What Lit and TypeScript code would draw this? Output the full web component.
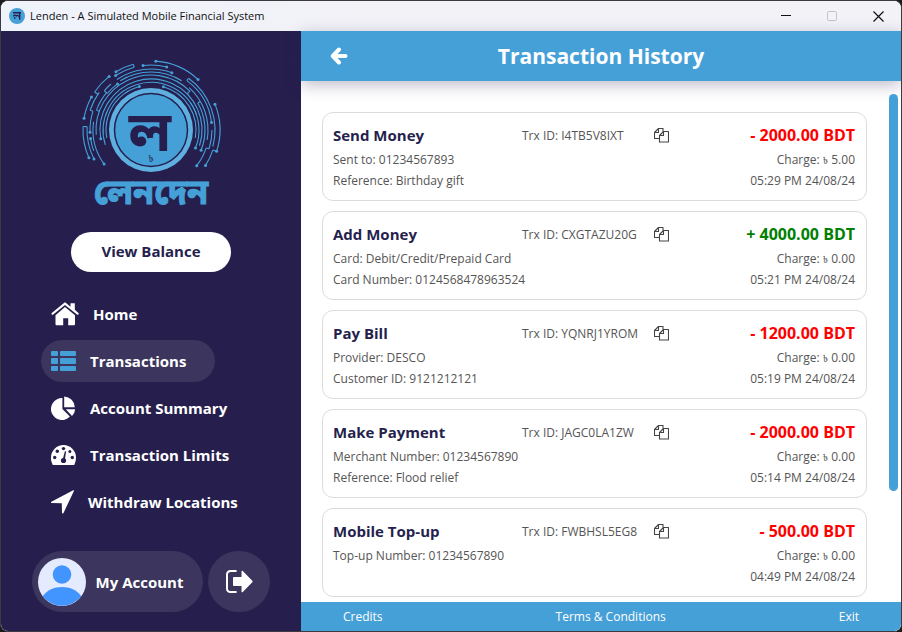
import { LitElement, html, svg, css } from "lit";
import { customElement, property } from "lit/decorators.js";
import { classMap } from "lit/directives/class-map.js";

interface Transaction {
  title: string;
  lines: string[];
  id: string;
  amount: string;
  credit?: boolean;
  charge: string;
  time: string;
}

const TRANSACTIONS: Transaction[] = [
  { title: "Send Money", lines: ["Sent to: 01234567893", "Reference: Birthday gift"], id: "I4TB5V8IXT", amount: "- 2000.00 BDT", charge: "5.00", time: "05:29 PM 24/08/24" },
  { title: "Add Money", lines: ["Card: Debit/Credit/Prepaid Card", "Card Number: 0124568478963524"], id: "CXGTAZU20G", amount: "+ 4000.00 BDT", credit: true, charge: "0.00", time: "05:21 PM 24/08/24" },
  { title: "Pay Bill", lines: ["Provider: DESCO", "Customer ID: 9121212121"], id: "YQNRJ1YROM", amount: "- 1200.00 BDT", charge: "0.00", time: "05:19 PM 24/08/24" },
  { title: "Make Payment", lines: ["Merchant Number: 01234567890", "Reference: Flood relief"], id: "JAGC0LA1ZW", amount: "- 2000.00 BDT", charge: "0.00", time: "05:14 PM 24/08/24" },
  { title: "Mobile Top-up", lines: ["Top-up Number: 01234567890"], id: "FWBHSL5EG8", amount: "- 500.00 BDT", charge: "0.00", time: "04:49 PM 24/08/24" },
];

const FONT = css`"Open Sans", "Noto Sans", "Noto Sans Bengali", sans-serif`;

const homeIcon = svg`<svg width="28" height="24" viewBox="0 0 28 24" fill="#fff" aria-hidden="true">
  <path d="M19.500 1.200h4.300v6.600l3.600 3.200c.9.800-.4 2.300-1.400 1.500L14 2.900 2.200 12.500c-1 .8-2.300-.7-1.400-1.500L13 .9c.6-.5 1.400-.5 2 0l4.500 3.800z"/>
  <path d="M14 5l10 8.200V22c0 .9-.4 1.300-1.300 1.300h-5.500v-7h-5v7H5.800c-.9 0-1.300-.4-1.300-1.300v-8.800z"/></svg>`;
const listIcon = svg`<svg width="25" height="20" viewBox="0 0 25 20" fill="#46a0d8" aria-hidden="true">
  <rect width="7" height="5" rx="1"/><rect x="9" width="16" height="5" rx="1"/>
  <rect y="7" width="7" height="6" rx="1"/><rect x="9" y="7" width="16" height="6" rx="1"/>
  <rect y="15" width="7" height="5" rx="1"/><rect x="9" y="15" width="16" height="5" rx="1"/></svg>`;
const pieIcon = svg`<svg width="25" height="25" viewBox="0 0 25 25" fill="#fff" aria-hidden="true">
  <path d="M11.400 2v11l7.500 7.600A11 11 0 1 1 11.400 2z"/><path d="M13.200.5a11 11 0 0 1 10.600 10.700H13.200z"/>
  <path d="M14.800 13.200h9.300a10 10 0 0 1-3.100 6.700z"/></svg>`;
const gaugeIcon = svg`<svg width="25" height="20" viewBox="0 0 25 20" aria-hidden="true">
  <path fill="#fff" d="M1.800 20A12.400 12.400 0 0 1 0 12.500a12.500 12.500 0 0 1 25 0c0 2.900-.7 5.400-1.800 7.500z"/>
  <g fill="#261f4e"><circle cx="12.500" cy="3.600" r="1.700"/><circle cx="6.300" cy="6.300" r="1.700"/><circle cx="18.900" cy="6.500" r="1.500"/>
  <circle cx="3.700" cy="12.500" r="1.700"/><circle cx="21.300" cy="12.500" r="1.700"/><circle cx="12.500" cy="15.500" r="2.600"/>
  <path d="M11.700 14.500l2.200-8.200 1.200.3-1.300 8.400z"/></g></svg>`;
const arrowIcon = svg`<svg width="23" height="24" viewBox="0 0 23 24" fill="#fff" aria-hidden="true">
  <path d="M22.200.3c.6-.3 1 .1.700.8L12.500 23c-.4.900-1.500.700-1.500-.2l-.2-9.600-10.200-.1c-.8 0-.9-1-.2-1.400z"/></svg>`;
const avatarIcon = svg`<svg width="48" height="48" viewBox="0 0 48 48" aria-hidden="true">
  <circle cx="24" cy="24" r="24" fill="#e5ebff"/><circle cx="24" cy="16.500" r="9.300" fill="#4294ff"/>
  <path fill="#4294ff" d="M4.800 38.200C9 32 16 29 24 29s15 3 19.200 9.200A24 24 0 0 1 4.800 38.200z"/></svg>`;
const exitIcon = svg`<svg width="27" height="23" viewBox="0 0 27 23" fill="#fff" aria-hidden="true">
  <path d="M10.600 0v2H4.700C3 2 2 3 2 4.600v13.800C2 20 3 21 4.700 21h5.900v2H4.700C1.700 23 0 21.200 0 18.400V4.600C0 1.800 1.700 0 4.700 0z"/>
  <path d="M15.500 1.600c0-.9.700-1.200 1.300-.6l9.500 9.700c.5.500.5 1 0 1.500L16.800 22c-.6.600-1.300.3-1.300-.6V16H8.200c-.7 0-1.200-.4-1.200-1.100V8.100C7 7.400 7.500 7 8.200 7h7.300z"/></svg>`;
const backIcon = svg`<svg width="18" height="18" viewBox="0 0 18 18" fill="none" stroke="#fff" stroke-width="4" stroke-linecap="round" stroke-linejoin="round" aria-hidden="true">
  <path d="M9 2.500L2.800 9 9 15.500M3.500 9H15.500"/></svg>`;
const copyIcon = svg`<svg width="15" height="15" viewBox="0 0 15 15" fill="none" stroke="#444" stroke-width="1.100" stroke-linejoin="round" aria-hidden="true">
  <path d="M5.500 10.500h-5v-6l4-4h4.500v3"/><path d="M.5 4.500h4v-4"/><path d="M9.500 3.500h5v10.500H5.500V7.500z"/><path d="M5.500 7.500h4v-4"/></svg>`;

const CX = 80;
const CY = 80;
const point = (r: number, deg: number): [number, number] => {
  const a = (deg * Math.PI) / 180;
  return [CX + r * Math.sin(a), CY - r * Math.cos(a)];
};
const at = (r: number, deg: number) => point(r, deg).map((v) => v.toFixed(2)).join(" ");
const arc = (r: number, from: number, to: number) =>
  `M${at(r, from)}A${r} ${r} 0 ${Math.abs(to - from) > 180 ? 1 : 0} ${to > from ? 1 : 0} ${at(r, to)}`;
const step = (r1: number, r2: number, deg: number) => `M${at(r1, deg)}L${at(r2, deg)}`;

// Circuit tracks around the coin: [radius, start angle, end angle], clockwise from the top.
const TRACKS: [number, number, number][] = [
  [69, 4, 43], [65, -7, 14], [68, -31, -15], [65, -33, -15],
  [68, -56, -38], [68, -80, -61], [68, -114, -87], [64, -117, -87],
  [61, -92, -72], [61, -110, -98], [64, -72, -54], [61, -50, -41], [57, -50, -36],
  [69, 68, 108], [64, 36, 105], [65, 108, 123], [61, 36, 83], [61, 90, 108], [58, 108, 128],
  [61, -34, 20], [58, -32, 32], [55, -95, 45], [51, -100, 66], [48, -108, 72], [45, -100, -45],
  [58, -126, -82], [58, -70, -50], [57, 42, 100], [54, 60, 112], [51, 66, 108], [48, 55, 112],
  [45, -45, -15], [45, 16, 100],
];
const STEPS: [number, number, number][] = [
  [68, 65, -15], [68, 64, -56], [68, 64, -87], [61, 57, -50], [58, 55, -70], [64, 61, -72],
  [64, 61, 36], [57, 54, 60], [69, 65, 108], [61, 58, 108], [55, 51, 45],
];
const NODES: [number, number][] = [
  [69, 4], [69, 43], [65, -7], [65, 14], [68, -31], [65, -33], [68, -38], [68, -61], [68, -80],
  [68, -114], [64, -117], [61, -98], [61, -92], [61, 20], [57, -36], [58, -126], [45, -15], [45, 16],
  [69, 68], [61, 83], [65, 123], [58, 128], [69, 108], [54, 112], [48, 112], [51, -100],
];

const logo = svg`<svg class="logo" width="160" height="164" viewBox="0 0 160 164" role="img" aria-label="Lenden">
  <g fill="none" stroke="#46a0d8" stroke-width="1.100">
    ${TRACKS.map(([r, a, b]) => svg`<path d=${arc(r, a, b)}/>`)}
    ${STEPS.map(([a, b, d]) => svg`<path d=${step(a, b, d)}/>`)}
  </g>
  <g fill="#46a0d8">${NODES.map(([r, d]) => svg`<circle cx=${point(r, d)[0]} cy=${point(r, d)[1]} r="1.500"/>`)}</g>
  <circle cx="80" cy="80" r="42" fill="#5db0e0"/>
  <circle cx="80" cy="80" r="36.500" fill="#46a0d8" stroke="#261f4e" stroke-width="1.500"/>
  <text text-anchor="middle" fill="#261f4e"><tspan x="79" y="101" font-size="56" font-weight="700">ল</tspan><tspan x="80" y="112" font-size="9" font-weight="400">৳</tspan></text>
  <text x="80" y="154" text-anchor="middle" font-size="34" font-weight="700" fill="#46a0d8" stroke="#46a0d8">লেনদেন</text></svg>`;

@customElement("transaction-card")
export class TransactionCard extends LitElement {
  @property({ attribute: false }) item!: Transaction;

  static styles = css`
    :host {
      display: grid;
      grid-template-columns: 189px 1fr auto;
      flex: none;
      min-height: 89px;
      box-sizing: border-box;
      padding: 10px 11px 9px 10px;
      border: 1px solid #dcdcdc;
      border-radius: 11px;
      background: #fff;
      color: #555;
      font: 12px/21px ${FONT};
      white-space: nowrap;
    }
    h2 { margin: 0 0 2px; color: #261f4e; font-size: 15px; line-height: 24px; font-weight: 700; }
    p { margin: 0; }
    .ref { display: grid; grid-template-columns: 132px auto; justify-content: start; align-items: center; height: 24px; }
    .copy { display: flex; padding: 0; border: 0; background: none; }
    .sum { text-align: right; }
    .amount { margin-bottom: 2px; color: #f00; font-size: 16px; line-height: 24px; font-weight: 700; }
    .credit { color: #008000; }
    .taka { font-size: 9px; line-height: 1; }
  `;

  render() {
    const t = this.item;
    return html`
      <div><h2>${t.title}</h2>${t.lines.map((l) => html`<p>${l}</p>`)}</div>
      <div class="ref"><span>Trx ID: ${t.id}</span><button class="copy" aria-label="Copy transaction ID">${copyIcon}</button></div>
      <div class="sum">
        <p class=${classMap({ amount: true, credit: !!t.credit })}>${t.amount}</p>
        <p>Charge: <span class="taka">৳</span> ${t.charge}</p>
        <p>${t.time}</p>
      </div>`;
  }
}

@customElement("app-root")
export class AppRoot extends LitElement {
  static styles = css`
    :host { display: block; height: 100vh; background: #1b1b1b; font: 12px/20px ${FONT}; }
    * { box-sizing: border-box; }
    button { padding: 0; border: 0; background: none; color: inherit; font: inherit; }
    .window { display: flex; flex-direction: column; height: 100%; border: 1px solid #3c3a40; border-radius: 8px; overflow: hidden; background: #fff; }
    .titlebar { display: flex; align-items: center; height: 30px; flex: none; padding-left: 8px; background: linear-gradient(90deg, #eff3fc, #f2f2f7 40%); color: #111; }
    .titlebar svg { flex: none; }
    .name { flex: 1; margin-left: 5px; font-size: 11px; }
    .ctl { display: flex; align-items: center; justify-content: center; width: 46px; height: 30px; }
    .body { display: flex; flex: 1; min-height: 0; }
    .side { display: flex; flex-direction: column; width: 300px; flex: none; padding: 19px 30px; background: #261f4e; color: #fff; font-size: 15px; font-weight: 700; }
    .logo { align-self: center; flex: none; }
    .balance { align-self: center; width: 160px; height: 40px; margin: 18px 0 21px; padding-bottom: 2px; border-radius: 20px; background: #fff; color: #261f4e; }
    nav { display: flex; flex-direction: column; align-items: flex-start; gap: 5px; padding-left: 10px; }
    .link { display: flex; align-items: center; gap: 14px; height: 42px; padding: 0 29px 0 10px; border-radius: 21px; color: #fff; text-decoration: none; white-space: nowrap; }
    .active { background: #3c355d; }
    .account { display: flex; justify-content: center; gap: 5px; margin-top: auto; }
    .me, .out { display: flex; align-items: center; height: 61px; border-radius: 31px; background: #3c355d; }
    .me { gap: 10px; padding: 0 20px 0 6px; white-space: nowrap; }
    .out { justify-content: center; width: 62px; }
    .main { display: flex; flex-direction: column; flex: 1; min-width: 0; background: #fff; }
    .head { display: grid; grid-template-columns: 76px 1fr 76px; align-items: center; height: 50px; flex: none; background: #46a0d8; color: #fff; box-shadow: 0 4px 16px rgba(38, 31, 78, 0.3); }
    .head h1 { margin: 0; text-align: center; font-size: 21px; line-height: 30px; font-weight: 700; }
    .back { display: flex; justify-content: center; }
    .scroll { display: flex; flex: 1; min-height: 0; overflow: hidden; padding-right: 3px; }
    .list { display: flex; flex-direction: column; gap: 10px; flex: 1; padding: 31px 22px 5px 21px; }
    .track { width: 9px; flex: none; padding-top: 13px; }
    .thumb { height: 397px; border-radius: 5px; background: #46a0d8; }
    .foot { display: flex; align-items: center; justify-content: space-between; height: 29px; flex: none; padding: 0 42px; background: #46a0d8; }
    .foot a { color: #fff; text-decoration: none; }
  `;

  render() {
    const nav = [
      { label: "Home", icon: homeIcon },
      { label: "Transactions", icon: listIcon, active: true },
      { label: "Account Summary", icon: pieIcon },
      { label: "Transaction Limits", icon: gaugeIcon },
      { label: "Withdraw Locations", icon: arrowIcon },
    ];
    return html`<div class="window">
      <div class="titlebar">
        <svg width="16" height="16" viewBox="0 0 16 16" aria-hidden="true"><circle cx="8" cy="8" r="8" fill="#46a0d8"/>
          <path d="M4 4.700h8M10.700 4.700v7M4.500 8.500c0-1.800 3-1.800 3 0M7 8.500c1-2 2.500-1 3.500.5M5 10h1.500" fill="none" stroke="#261f4e" stroke-width="1.400"/></svg>
        <span class="name">Lenden - A Simulated Mobile Financial System</span>
        <button class="ctl" aria-label="Minimize"><svg width="10" height="10"><path d="M0 4.500h10" stroke="#111"/></svg></button>
        <button class="ctl" aria-label="Maximize" disabled><svg width="10" height="10"><rect x=".5" y=".5" width="9" height="9" rx="1" fill="none" stroke="#c4c4c8"/></svg></button>
        <button class="ctl" aria-label="Close"><svg width="11" height="11"><path d="M.5.500l10 10M10.500.500l-10 10" stroke="#111" stroke-width="1.200"/></svg></button>
      </div>
      <div class="body">
        <aside class="side">
          ${logo}
          <button class="balance">View Balance</button>
          <nav>${nav.map((n) => html`<a href="#" class=${classMap({ link: true, active: !!n.active })}>${n.icon}<span>${n.label}</span></a>`)}</nav>
          <div class="account">
            <button class="me">${avatarIcon}<span>My Account</span></button>
            <button class="out" aria-label="Log out">${exitIcon}</button>
          </div>
        </aside>
        <main class="main">
          <header class="head">
            <button class="back" aria-label="Back">${backIcon}</button>
            <h1>Transaction History</h1>
          </header>
          <div class="scroll">
            <div class="list">${TRANSACTIONS.map((t) => html`<transaction-card .item=${t}></transaction-card>`)}</div>
            <div class="track"><div class="thumb"></div></div>
          </div>
          <footer class="foot"><a href="#">Credits</a><a href="#">Terms &amp; Conditions</a><a href="#">Exit</a></footer>
        </main>
      </div>
    </div>`;
  }
}
